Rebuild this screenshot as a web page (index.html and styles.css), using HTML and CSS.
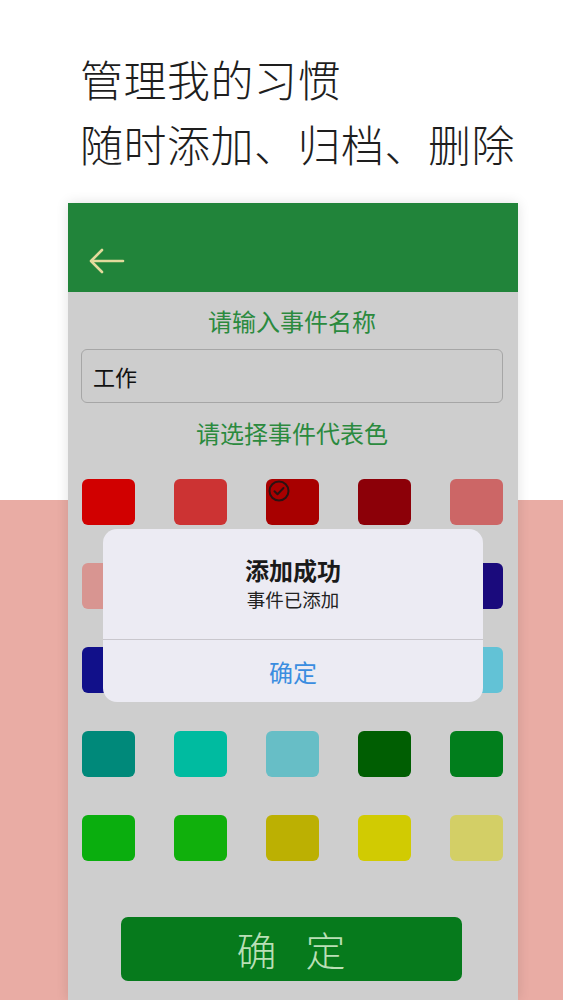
FILE: index.html
```html
<!DOCTYPE html>
<html lang="zh-CN">
<head>
<meta charset="utf-8">
<title>管理我的习惯</title>
<link rel="stylesheet" href="styles.css">
</head>
<body>
<div class="hero">
  <p class="hero-line">管理我的习惯</p>
  <p class="hero-line">随时添加、归档、删除</p>
</div>
<div class="phone">
  <div class="header">
    <svg class="back" width="36" height="26" viewBox="0 0 36 26" fill="none" stroke="#e3da9c" stroke-width="2.6" stroke-linecap="round" stroke-linejoin="round">
      <path d="M34 13H3"/>
      <path d="M13 2L2 13l11 11"/>
    </svg>
  </div>
  <div class="content">
    <div class="label">请输入事件名称</div>
    <div class="input">工作</div>
    <div class="label label-2">请选择事件代表色</div>
    <div class="grid">
      <div class="sw c11"></div>
      <div class="sw c12"></div>
      <div class="sw c13 selected">
        <svg class="check" width="22" height="22" viewBox="0 0 22 22" fill="none" stroke="#2a1212" stroke-width="2" stroke-linecap="round" stroke-linejoin="round">
          <circle cx="11" cy="11" r="9.5"/>
          <path d="M6.5 11.2l3 3 6-6.2"/>
        </svg>
      </div>
      <div class="sw c14"></div>
      <div class="sw c15"></div>
      <div class="sw c21"></div>
      <div class="sw c22"></div>
      <div class="sw c23"></div>
      <div class="sw c24"></div>
      <div class="sw c25"></div>
      <div class="sw c31"></div>
      <div class="sw c32"></div>
      <div class="sw c33"></div>
      <div class="sw c34"></div>
      <div class="sw c35"></div>
      <div class="sw c41"></div>
      <div class="sw c42"></div>
      <div class="sw c43"></div>
      <div class="sw c44"></div>
      <div class="sw c45"></div>
      <div class="sw c51"></div>
      <div class="sw c52"></div>
      <div class="sw c53"></div>
      <div class="sw c54"></div>
      <div class="sw c55"></div>
    </div>
    <div class="confirm"><span>确</span><span>定</span></div>
  </div>
  <div class="alert">
    <div class="alert-body">
      <div class="alert-title">添加成功</div>
      <div class="alert-msg">事件已添加</div>
    </div>
    <div class="alert-btn">确定</div>
  </div>
</div>
</body>
</html>
```
FILE: styles.css
```css
html, body {
  margin: 0;
  padding: 0;
}
body {
  width: 563px;
  height: 1000px;
  overflow: hidden;
  font-family: "Noto Sans CJK SC", "Noto Sans", sans-serif;
  background: linear-gradient(to bottom, #ffffff 0, #ffffff 500px, #e9aca4 500px, #e9aca4 100%);
}
.hero {
  padding: 46px 0 0 80px;
  height: 203px;
  box-sizing: border-box;
}
.hero-line {
  margin: 0;
  font-size: 43px;
  line-height: 65px;
  font-weight: 300;
  color: #1e1e1e;
  letter-spacing: 0.5px;
}
.phone {
  position: relative;
  margin-left: 68px;
  width: 450px;
  height: 797px;
  background: #cecece;
  box-shadow: 0 0 12px rgba(0, 0, 0, 0.12);
}
.header {
  height: 89px;
  background: #21843a;
  display: flex;
  align-items: center;
  padding-left: 21px;
}
.back {
  display: block;
  margin-top: 26px;
}
.content {
  padding: 12px 15px 0 13px;
  display: flex;
  flex-direction: column;
}
.label {
  text-align: center;
  font-size: 24px;
  line-height: 34px;
  color: #2b8a3e;
}
.input {
  margin-top: 11px;
  height: 54px;
  box-sizing: border-box;
  border: 1px solid #a6a6a6;
  border-radius: 6px;
  background: #cdcdcd;
  padding-left: 11px;
  font-size: 22px;
  line-height: 52px;
  color: #111;
}
.label-2 {
  margin-top: 13px;
}
.grid {
  margin-top: 29px;
  margin-left: 1px;
  display: grid;
  grid-template-columns: repeat(5, 53px);
  grid-auto-rows: 46px;
  column-gap: 39px;
  row-gap: 38px;
}
.sw {
  border-radius: 6px;
  position: relative;
}
.check {
  position: absolute;
  left: 2px;
  top: 1px;
}
.c11 { background: #d10000; }
.c12 { background: #cc3333; }
.c13 { background: #a80000; }
.c14 { background: #8c0008; }
.c15 { background: #cc6666; }
.c21 { background: #d89591; }
.c22 { background: #c98583; }
.c23 { background: #9a4a88; }
.c24 { background: #4a1a8c; }
.c25 { background: #1a0a7c; }
.c31 { background: #11108a; }
.c32 { background: #1a3aa0; }
.c33 { background: #3070c0; }
.c34 { background: #4a98d0; }
.c35 { background: #62c2d6; }
.c41 { background: #00897a; }
.c42 { background: #00bba0; }
.c43 { background: #67bec6; }
.c44 { background: #005e02; }
.c45 { background: #017e1c; }
.c51 { background: #0aae0e; }
.c52 { background: #10b00c; }
.c53 { background: #bcb002; }
.c54 { background: #d1cb02; }
.c55 { background: #d3cf66; }
.confirm {
  margin: 56px auto 0;
  width: 341px;
  height: 64px;
  border-radius: 7px;
  background: #067a1c;
  display: flex;
  justify-content: center;
  align-items: center;
  gap: 29px;
  color: #b9dfb6;
  font-size: 40px;
  font-weight: 300;
  line-height: 64px;
  position: relative;
  left: -1px;
}
.alert {
  position: absolute;
  left: 35px;
  top: 326px;
  width: 380px;
  height: 173px;
  border-radius: 14px;
  background: #ecebf3;
  display: flex;
  flex-direction: column;
  overflow: hidden;
}
.alert-body {
  height: 111px;
  border-bottom: 1px solid #c9c7cd;
  display: flex;
  flex-direction: column;
  align-items: center;
  padding-top: 26px;
  box-sizing: border-box;
}
.alert-title {
  font-size: 24px;
  font-weight: 700;
  line-height: 30px;
  color: #1a1a1a;
}
.alert-msg {
  font-size: 18.5px;
  line-height: 26px;
  color: #222;
  margin-top: 1px;
}
.alert-btn {
  flex: 1;
  display: flex;
  align-items: center;
  justify-content: center;
  font-size: 24px;
  color: #3a8de0;
}
```
